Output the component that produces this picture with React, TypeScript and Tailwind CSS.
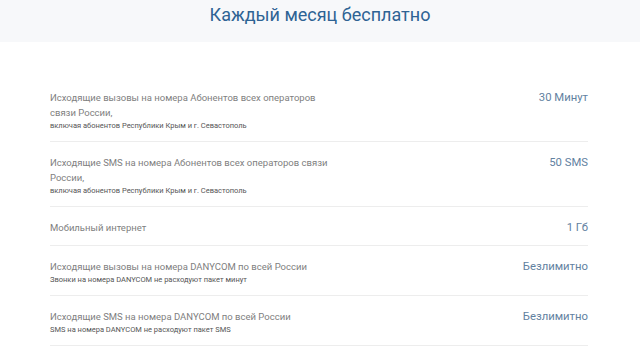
const items = [
  {
    title: "Исходящие вызовы на номера Абонентов всех операторов связи России,",
    note: "включая абонентов Республики Крым и г. Севастополь",
    value: "30 Минут",
  },
  {
    title: "Исходящие SMS на номера Абонентов всех операторов связи России,",
    note: "включая абонентов Республики Крым и г. Севастополь",
    value: "50 SMS",
  },
  {
    title: "Мобильный интернет",
    value: "1 Гб",
  },
  {
    title: "Исходящие вызовы на номера DANYCOM по всей России",
    note: "Звонки на номера DANYCOM не расходуют пакет минут",
    value: "Безлимитно",
  },
  {
    title: "Исходящие SMS на номера DANYCOM по всей России",
    note: "SMS на номера DANYCOM не расходуют пакет SMS",
    value: "Безлимитно",
  },
];

export default function App() {
  return (
    <div className="min-h-screen bg-white font-['Roboto',sans-serif]">
      <header className="h-[42px] bg-[#f7f8fa] flex justify-center">
        <h1 className="text-[18px] leading-[29px] text-[#2e6394] font-normal">Каждый месяц бесплатно</h1>
      </header>

      <ul className="mt-[35px] ml-[50px] mr-[52px]">
        {items.map((it, i) => (
          <li key={i} className="flex justify-between border-b border-[#ededed] pt-[13px] pb-[10px]">
            <div className="w-[282px]">
              <p className="text-[9.5px] leading-[15px] text-[#808080]">{it.title}</p>
              {it.note && <p className="text-[7.5px] leading-[11px] text-[#555]">{it.note}</p>}
            </div>
            <span className="text-[11.3px] leading-[15px] text-[#62819f]">{it.value}</span>
          </li>
        ))}
      </ul>
    </div>
  );
}
